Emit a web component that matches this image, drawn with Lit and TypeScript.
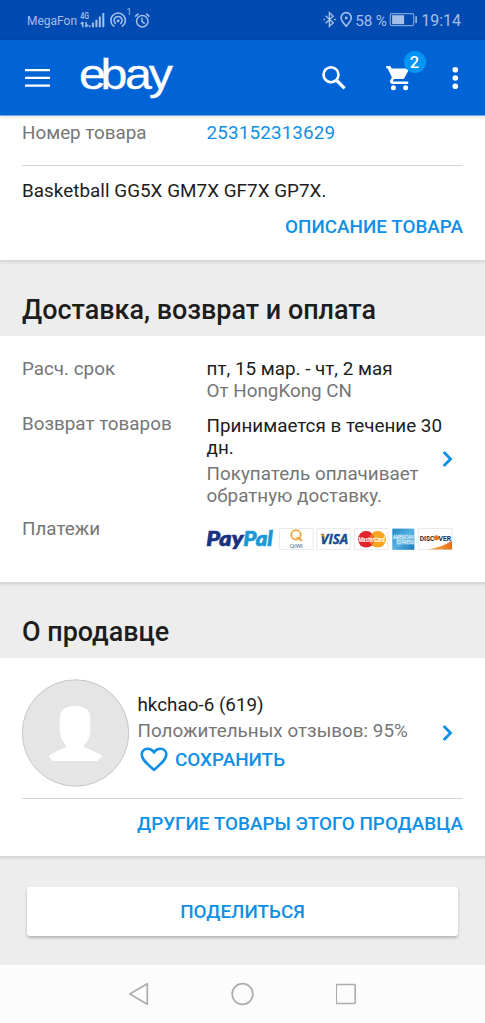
import { LitElement, html, css, svg } from "lit";
import { customElement } from "lit/decorators.js";

@customElement("status-bar")
class StatusBar extends LitElement {
  static styles = css`
    :host { display: flex; justify-content: space-between; align-items: center; height: 40px; background: #004ab1; color: #a4bfe8; font: 16px/20px Roboto, sans-serif; }
    svg { display: block; }
    .side { display: flex; align-items: center; }
    .left { padding-left: 27px; }
    .right { padding-right: 24px; }
    .carrier { font-size: 12px; width: 52px; white-space: nowrap; padding-top: 1px; }
    .pct { margin-left: 3px; width: 34px; white-space: nowrap; font-size: 15.3px; letter-spacing: -.1px; padding-top: 2px; }
    .time { margin-left: 4px; padding-top: 2px; }
  `;
  render() {
    return html`
      <div class="side left">
        <span class="carrier">MegaFon</span>
        <svg width="74" height="24" viewBox="79 8 74 24" fill="none" stroke="currentColor">
          <text x="80.2" y="19.2" font-size="9" font-weight="600" textLength="8.8" lengthAdjust="spacingAndGlyphs" fill="currentColor" stroke="none">4G</text>
          <path d="M82.8 22v5.2M86 22v5.2M80.8 24.2l2-2.2M86 27l2-2.2M89.6 25.2v2" stroke-width="1.5" />
          <path d="M92.9 22.4v4.9M96.4 19.8v7.5M99.8 16.6v10.700M103.300 13v14.300" stroke-width="2" />
          <path d="M113.800 26.200a7.300 7.300 0 1 1 8.600 0M115.400 23.400a4 4 0 1 1 5.400 0" stroke-width="1.600" stroke-linecap="round" />
          <circle cx="118.100" cy="20.800" r="1.500" fill="currentColor" stroke="none" />
          <text x="126.600" y="15" font-size="9" fill="currentColor" stroke="none">1</text>
          <circle cx="142.300" cy="21.200" r="5.700" stroke-width="1.500" />
          <path d="M142 17.800v3.600l2.700 2.200M135.200 16.600l3.200-3M149.400 16.600l-3.200-3" stroke-width="1.500" />
        </svg>
      </div>
      <div class="side right">
        <svg width="30" height="20" viewBox="318 11 30 20" fill="none" stroke="currentColor" stroke-width="1.400">
          <path d="M321.600 16.800l7.600 7-3.800 3.600V13.600l3.800 3.600-7.600 7" />
          <path d="M319.600 20.500h1.400M329.900 20.500h1.800" stroke-width="1.700" />
          <path d="M342.200 27.300c-2.600-3.300-5.100-5.600-5.100-8.600a5.100 5.100 0 0 1 10.200 0c0 3-2.500 5.300-5.100 8.600z" stroke-width="1.600" />
          <circle cx="342.200" cy="19" r="1.400" fill="currentColor" stroke="none" />
        </svg>
        <span class="pct">58 %</span>
        <svg width="28" height="14" viewBox="387.500 14 28 14" fill="none" stroke="currentColor">
          <rect x="388.800" y="14.700" width="23.400" height="12" rx="1.500" stroke-width="1.200" stroke-opacity=".75" />
          <rect x="390.600" y="16.200" width="12" height="9" fill="currentColor" stroke="none" />
          <path d="M414.600 17.200v6.800" stroke-width="1.500" />
        </svg>
        <span class="time">19:14</span>
      </div>
    `;
  }
}

@customElement("app-bar")
class AppBar extends LitElement {
  static styles = css`
    :host { display: flex; align-items: center; height: 76px; padding: 0 24px 0 25px; background: #0063d6; color: #fff; border-bottom: 1px solid #73a8e6; box-sizing: border-box; position: relative; box-shadow: 0 1px 4px rgba(0,0,0,.14); }
    svg { display: block; }
    .logo { margin-left: 27px; overflow: visible; }
    .actions { display: flex; align-items: center; margin-left: auto; }
    .cart { position: relative; margin-left: 38px; }
    .badge { position: absolute; left: 18.5px; top: -14px; width: 22px; height: 22px; border-radius: 50%; background: #0395f6; text-align: center; font: 500 16.5px/23px Roboto, sans-serif; }
    .more { margin-left: 38px; }
  `;
  render() {
    return html`
      <svg width="25" height="18" viewBox="0 0 25 18"><path d="M0 1.2h25M0 8.9h25M0 16.6h25" stroke="#fff" stroke-width="2.3" /></svg>
      <svg class="logo" width="98" height="64" viewBox="77 46 98 64">
        <text transform="translate(0 88.6) scale(1.15 1)" x="68.6 87.5 108.6 129.4" font-family="Liberation Sans, sans-serif" font-size="42" fill="#fff" stroke="#fff" stroke-width=".3">ebay</text>
      </svg>
      <div class="actions">
        <svg width="26" height="26" viewBox="321 65 26 26" fill="none" stroke="#fff"><circle cx="331" cy="74.7" r="7.5" stroke-width="2.6" /><path d="M336.3 80l8.3 8.3" stroke-width="3.2" /></svg>
        <div class="cart">
          <svg width="26" height="26" viewBox="385.5 65 26 26" fill="#fff">
            <path d="M386.7 65.9h4.1l1.4 2.5h17.7l-4.7 9.2c-.4.9-1.2 1.5-2.1 1.5h-8.7l-1.2 2.4h15.5v2.5h-15.6c-2 0-3.2-2-2.3-3.7l1.6-3.1-4.4-8.9h-1.3z" />
            <circle cx="393.9" cy="87.8" r="2.5" /><circle cx="406.1" cy="87.8" r="2.5" />
          </svg>
          <span class="badge">2</span>
        </div>
        <svg class="more" width="12" height="24" viewBox="0 0 12 24" fill="#fff"><circle cx="6.3" cy="3.8" r="2.8" /><circle cx="6.3" cy="12" r="2.8" /><circle cx="6.3" cy="20.2" r="2.8" /></svg>
      </div>
    `;
  }
}

@customElement("go-chevron")
class GoChevron extends LitElement {
  static styles = css`:host { display: block; } svg { display: block; }`;
  render() {
    return html`<svg width="12" height="18" viewBox="0 0 12 18"><path d="M1.7 2l6.9 7-6.9 7" fill="none" stroke="#0f90e6" stroke-width="2.8" /></svg>`;
  }
}

@customElement("payment-logos")
class PaymentLogos extends LitElement {
  static styles = css`:host { display: block; } svg { display: block; }`;
  card(x: number) {
    return svg`<rect x=${x} y="528.6" width="33.4" height="21" fill="#fff" stroke="#e9e9e9" />`;
  }
  render() {
    return html`
      <svg width="248" height="26" viewBox="206 526 248 26">
        <defs>
          <linearGradient id="amex" x1="0" y1="0" x2="1" y2="1"><stop offset="0" stop-color="#1f86c5" /><stop offset=".5" stop-color="#58b0df" /><stop offset="1" stop-color="#1579bd" /></linearGradient>
          <linearGradient id="wedge"><stop offset="0" stop-color="#f6b25c" /><stop offset="1" stop-color="#e96f10" /></linearGradient>
        </defs>
        <g font-family="Lato, sans-serif" font-weight="900" font-style="italic" font-size="20.5" stroke-width=".7">
          <text x="206.300" y="546" textLength="37" lengthAdjust="spacingAndGlyphs" fill="#17327f" stroke="#17327f">Pay</text>
          <text x="243.300" y="546" textLength="29.500" lengthAdjust="spacingAndGlyphs" fill="#1b98d8" stroke="#1b98d8">Pal</text>
        </g>
        ${this.card(279.6)}${this.card(316.8)}${this.card(354.5)}
        <circle cx="296" cy="534.900" r="4.700" fill="none" stroke="#efa63a" stroke-width="1.800" />
        <path d="M296.500 537.500c2.500-.2 4 1.800 5.300 3.500" fill="none" stroke="#e8942d" stroke-width="1.600" />
        <text x="289.800" y="547.800" font-family="Roboto, sans-serif" font-size="6.200" textLength="13" fill="#3a6798">QIWI</text>
        <text x="320.600" y="544.300" font-family="Open Sans, sans-serif" font-size="13.500" font-weight="700" font-style="italic" textLength="27.500" lengthAdjust="spacingAndGlyphs" fill="#164b8f" stroke="#164b8f" stroke-width=".4">VISA</text>
        <path d="M319.500 534.500h4.700l1.600 5.200c-1.300-2.700-3.100-4.100-6.300-5.200z" fill="#efa51f" />
        <circle cx="366.200" cy="539.300" r="8.300" fill="#e1242b" />
        <circle cx="377.700" cy="539.300" r="8.300" fill="#f8a51d" />
        <path d="M372 533.300a8.300 8.300 0 0 1 0 12 8.300 8.300 0 0 1 0-12z" fill="#eb7225" />
        <text x="358.400" y="541.700" font-family="Roboto, sans-serif" font-size="6.300" font-weight="700" font-style="italic" textLength="26.500" lengthAdjust="spacingAndGlyphs" fill="#fff">MasterCard</text>
        <rect x="392.300" y="528.600" width="22" height="21.200" fill="url(#amex)" />
        <g font-family="Roboto, sans-serif" font-size="5.300" font-weight="700" fill="#4aa1d4" stroke="#d6effb" stroke-width=".45">
          <text x="393" y="539" textLength="20.500" lengthAdjust="spacingAndGlyphs">AMERICAN</text>
          <text x="396.500" y="544.300" textLength="17.500" lengthAdjust="spacingAndGlyphs">EXPRESS</text>
        </g>
        ${this.card(418.7)}
        <path d="M452 540.500v9h-24c9-1.500 17-4.400 24-9z" fill="url(#wedge)" />
        <g font-family="Roboto, sans-serif" font-size="7.600" font-weight="700" fill="#292929">
          <text x="419.800" y="540.500" textLength="14.500" lengthAdjust="spacingAndGlyphs">DISC</text>
          <text x="438.500" y="540.500" textLength="12.500" lengthAdjust="spacingAndGlyphs">VER</text>
        </g>
        <circle cx="436.500" cy="537.800" r="2.600" fill="#ee7623" />
      </svg>
    `;
  }
}

@customElement("app-root")
class AppRoot extends LitElement {
  static styles = css`
    :host { display: flex; flex-direction: column; width: 485px; height: 1023px; overflow: hidden; background: #ededed; color: #1d1d1d; font: 18.83px/22px Roboto, sans-serif; }
    svg { display: block; }
    .card { background: #fff; padding: 0 22px; box-sizing: border-box; border-bottom: 2px solid #d9d9d9; box-shadow: 0 1px 2px rgba(0,0,0,.07); white-space: nowrap; }
    .item { height: 146px; padding-top: 6px; }
    .delivery { height: 248px; padding-top: 22px; }
    .seller { height: 200px; padding-top: 21px; }
    .row { display: grid; grid-template-columns: 184.6px 1fr; }
    .label, .muted { color: #767676; }
    .link { color: #0f90e6; letter-spacing: .14px; }
    .action { color: #0f90e6; font-size: 18.86px; font-weight: 500; text-align: right; }
    .rule { border-top: 1px solid #d4d4d4; }
    .item .rule { margin: 21px 0 14px; }
    .item .action { margin-top: 14px; }
    .title { letter-spacing: .04px; }
    h2 { margin: 0; padding: 0 22px; font-size: 26.94px; line-height: 32px; font-weight: 500; box-sizing: border-box; }
    .h-delivery { height: 74px; padding-top: 32px; }
    .h-seller { height: 74px; padding-top: 32px; }
    .returns { margin-top: 11px; }
    .returns .value { display: grid; grid-template-columns: 235.4px 12px; align-items: center; padding-top: 2px; }
    .returns .muted { margin-top: 4px; }
    .returns go-chevron { margin-bottom: 5px; }
    .payments { margin-top: 11px; }
    .payments payment-logos { margin-top: 8px; margin-left: -.6px; }
    .profile { display: grid; grid-template-columns: 115.5px 304.5px 12px; align-items: center; height: 108px; }
    .rating { margin-top: 4px; letter-spacing: .02px; }
    .save { display: flex; align-items: center; gap: 7.5px; margin-top: 5px; padding-left: 2px; color: #0f90e6; font-size: 18.86px; font-weight: 500; }
    .seller .rule { margin: 11px 0 14px; }
    .share { margin: 29px 27px; height: 49px; flex: none; border: 0; border-radius: 3px; background: #fff; color: #0f90e6; font: 500 18.86px/22px Roboto, sans-serif; box-shadow: 0 2px 3px rgba(0,0,0,.24); padding: 1px 0 0; }
    nav { display: flex; align-items: center; flex: 1; background: #fcfcfc; padding-left: 128px; gap: 81px; }
  `;
  render() {
    return html`
      <status-bar></status-bar>
      <app-bar></app-bar>
      <section class="card item">
        <div class="row"><span class="label">Номер товара</span><span class="link">253152313629</span></div>
        <div class="rule"></div>
        <div class="title">Basketball GG5X GM7X GF7X GP7X.</div>
        <div class="action">ОПИСАНИЕ ТОВАРА</div>
      </section>
      <h2 class="h-delivery">Доставка, возврат и оплата</h2>
      <section class="card delivery">
        <div class="row">
          <span class="label">Расч. срок</span>
          <div><div>пт, 15 мар. - чт, 2 мая</div><div class="muted">От HongKong CN</div></div>
        </div>
        <div class="row returns">
          <span class="label">Возврат товаров</span>
          <div class="value">
            <div><div>Принимается в течение 30<br />дн.</div><div class="muted">Покупатель оплачивает<br />обратную доставку.</div></div>
            <go-chevron></go-chevron>
          </div>
        </div>
        <div class="row payments"><span class="label">Платежи</span><payment-logos></payment-logos></div>
      </section>
      <h2 class="h-seller">О продавце</h2>
      <section class="card seller">
        <div class="profile">
          <svg width="108" height="108" viewBox="0 0 108 108">
            <circle cx="53.5" cy="54" r="53.2" fill="#e5e5e5" stroke="#c6c6c6" />
            <path d="M53 27c11 0 15.800 5 15.400 14.500v9c0 7-2.300 11.500-6.200 15.500l-.5 1.500c5 3 12.800 5.200 18.700 9.500l-4.500 4.500q-.8.500-1.500.5H31.500q-.8 0-1.500-.5l-3.500-4.500c5.500-4.300 13-6.500 18-9.500L44 66c-3.900-4-6.200-8.500-6.200-15.500v-9C37.400 32 42 27 53 27z" fill="#fff" />
          </svg>
          <div>
            <div>hkchao-6 (619)</div>
            <div class="muted rating">Положительных отзывов: 95%</div>
            <div class="save">
              <svg width="28" height="25" viewBox="0 0 28 25"><path d="M14 22.800C7.500 17 1.700 13 1.700 7.600c0-3.400 2.600-5.900 5.900-5.900 2.600 0 4.900 1.300 6.400 3.500 1.500-2.200 3.800-3.500 6.400-3.500 3.300 0 5.900 2.500 5.900 5.900 0 5.400-5.800 9.400-12.300 15.200z" fill="none" stroke="#0f90e6" stroke-width="2.600" /></svg>
              <span>СОХРАНИТЬ</span>
            </div>
          </div>
          <go-chevron></go-chevron>
        </div>
        <div class="rule"></div>
        <div class="action">ДРУГИЕ ТОВАРЫ ЭТОГО ПРОДАВЦА</div>
      </section>
      <button class="share">ПОДЕЛИТЬСЯ</button>
      <nav>
        <svg width="22" height="24" viewBox="0 0 22 24"><path d="M19.3 1.7v20.600L1.800 12z" fill="none" stroke="#adadad" stroke-width="1.700" stroke-linejoin="round" /></svg>
        <svg width="24" height="24" viewBox="0 0 24 24"><circle cx="11.500" cy="12" r="10.300" fill="none" stroke="#adadad" stroke-width="1.700" /></svg>
        <svg width="22" height="24" viewBox="0 0 22 24"><rect x="1" y="2.500" width="19" height="19" rx="1" transform="translate(-.8 0)" overflow="visible" fill="none" stroke="#adadad" stroke-width="1.700" /></svg>
      </nav>
    `;
  }
}
